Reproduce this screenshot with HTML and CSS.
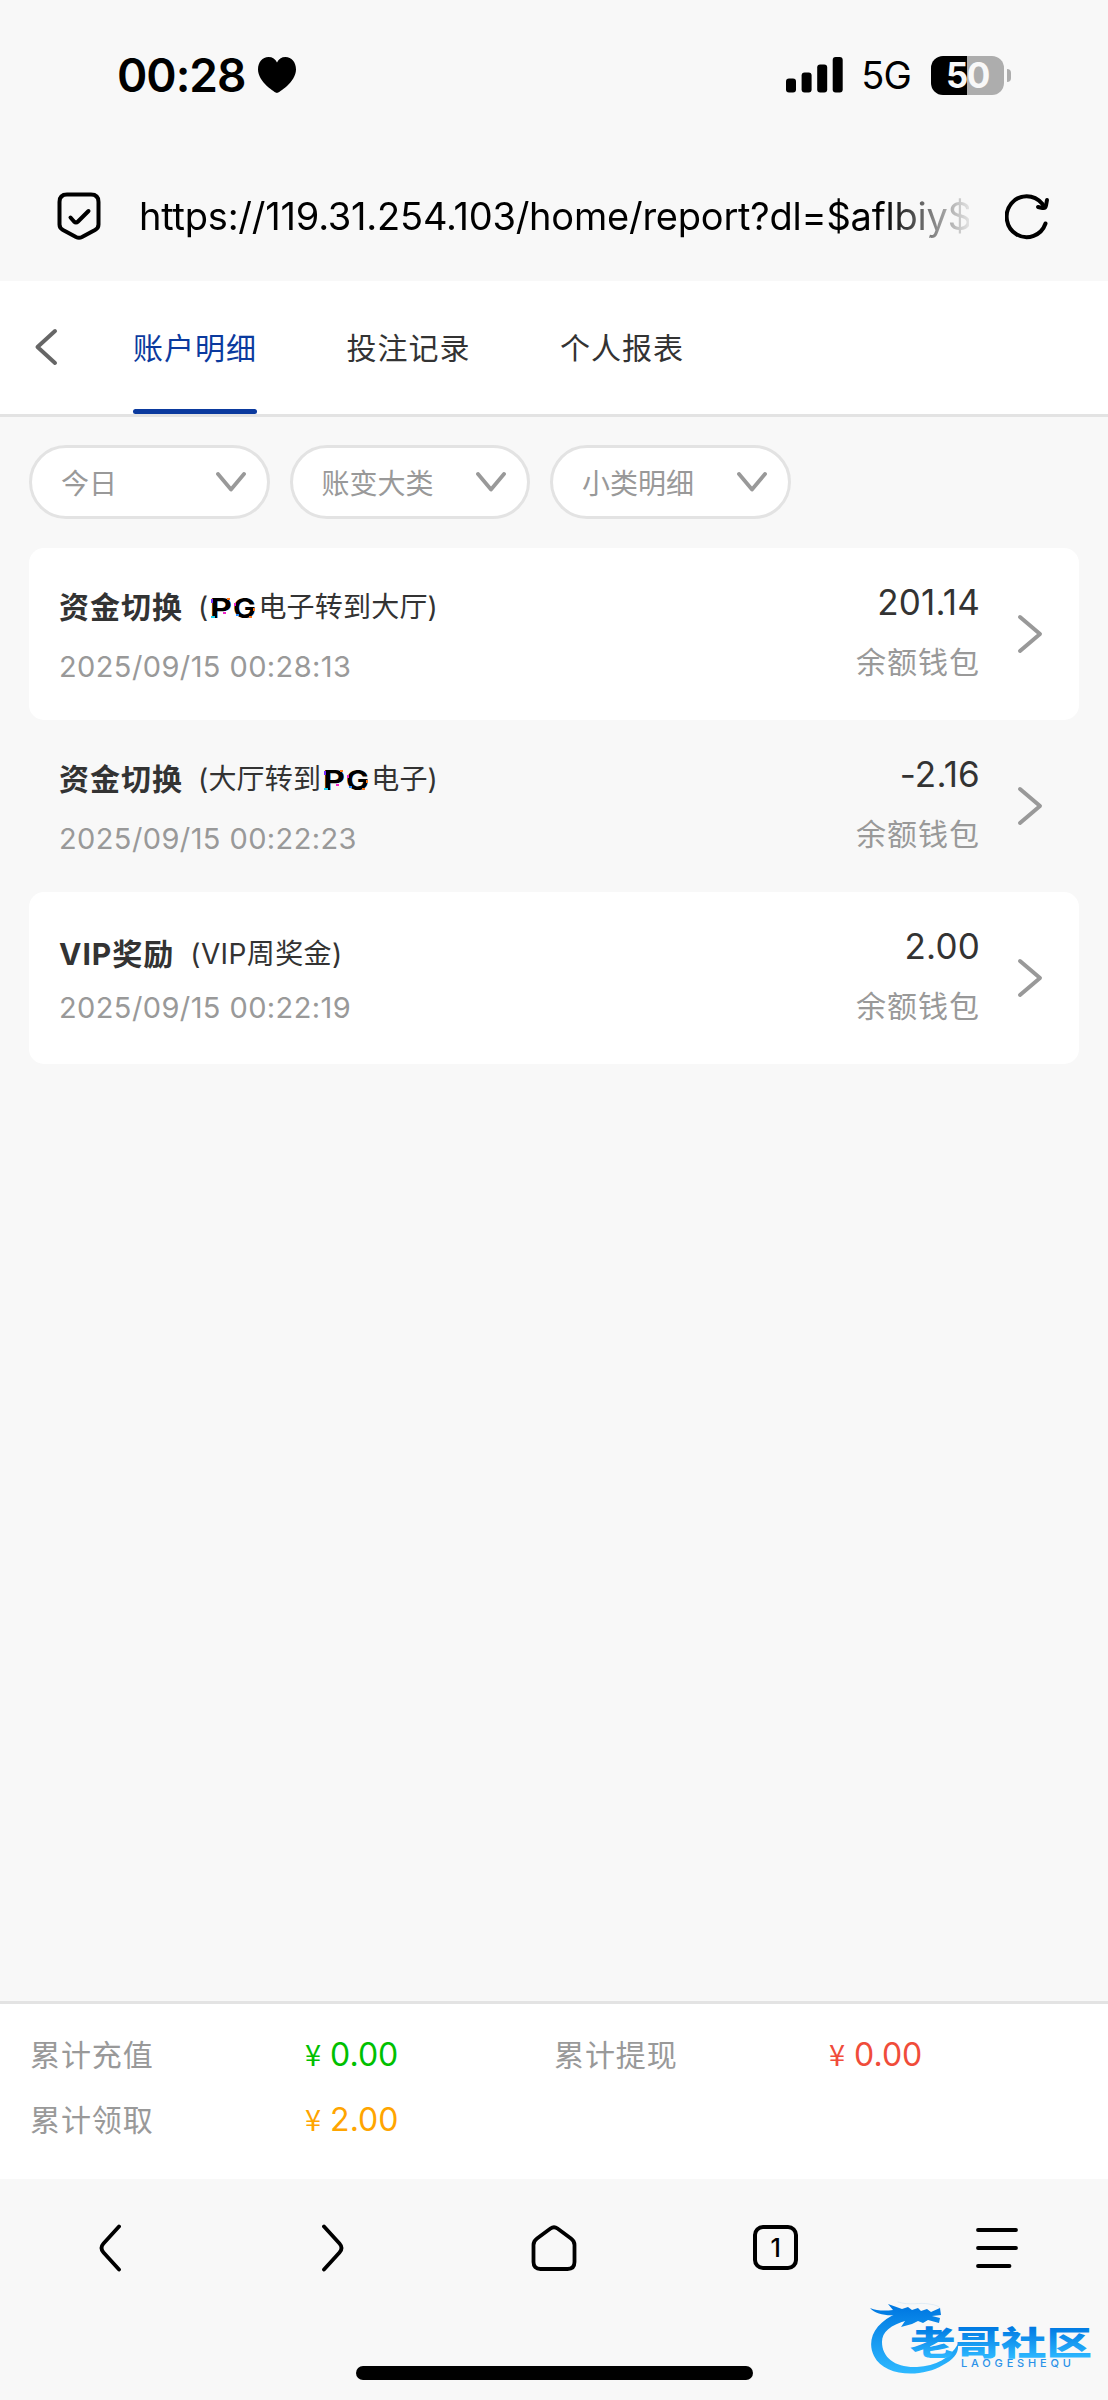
FILE: index.html
```html
<!DOCTYPE html>
<html lang="zh-CN">
<head>
  <meta charset="UTF-8" />
  <meta name="viewport" content="width=device-width, initial-scale=1.0"/>
  <title>账户明细</title>
  <link rel="stylesheet" href="styles.css">
</head>
<body>
  <!-- status bar -->
  <div class="status-bar">
    <div class="status-left">
      <span class="time">00:28</span>
      <svg class="heart" width="38" height="36" viewBox="0 0 38 36"><path d="M19 36C17.500 36 0 25 0 12.500C0 5 4.500 0 10.500 0C14.500 0 17.500 2 19 5.500C20.500 2 23.500 0 27.500 0C33.500 0 38 5 38 12.500C38 25 20.500 36 19 36Z"/></svg>
    </div>
    <div class="status-right">
      <svg class="signal" width="57" height="36" viewBox="0 0 57 36">
        <rect x="0" y="21.500" width="10" height="14" rx="3"/>
        <rect x="15.600" y="15.500" width="10" height="20" rx="3"/>
        <rect x="31.200" y="7.500" width="10" height="28" rx="3"/>
        <rect x="46.700" y="0" width="10" height="35.500" rx="3"/>
      </svg>
      <span class="network">5G</span>
      <div class="battery">50</div>
      <div class="battery-tip"></div>
    </div>
  </div>

  <!-- address bar -->
  <div class="address-bar">
    <svg class="shield" width="44" height="48" viewBox="0 0 44 48">
      <path d="M10 2.500H34Q41.500 2.500 41.500 10V32.500Q41.500 36 38 38L25 45Q22 46.500 19 45L6 38Q2.500 36 2.500 32.500V10Q2.500 2.500 10 2.500Z"/>
      <path d="M13.500 25.500L17 29.500Q19 31.500 21 29.500L31.500 19"/>
    </svg>
    <div class="url">https://119.31.254.103/home/report?dl=$aflbiy$</div>
    <svg class="reload" width="46" height="48" viewBox="0 0 46 48">
      <path d="M40.500 31.500A20 20.500 0 1 1 37 11.500L39.500 15"/>
      <path d="M42 8L41 13.500Q40.500 16.500 37.500 16L33 15"/>
    </svg>
  </div>

  <!-- tabs -->
  <div class="tabs">
    <svg class="back" width="24" height="38" viewBox="0 0 24 38"><path d="M21 3L3.500 19L21 35"/></svg>
    <a class="tab active">账户明细</a>
    <a class="tab">投注记录</a>
    <a class="tab">个人报表</a>
  </div>

  <!-- filters -->
  <div class="filters">
    <div class="filter">今日<svg width="30" height="20" viewBox="0 0 30 20"><path d="M2 2L15 17.500L28 2"/></svg></div>
    <div class="filter">账变大类<svg width="30" height="20" viewBox="0 0 30 20"><path d="M2 2L15 17.500L28 2"/></svg></div>
    <div class="filter">小类明细<svg width="30" height="20" viewBox="0 0 30 20"><path d="M2 2L15 17.500L28 2"/></svg></div>
  </div>

  <!-- records -->
  <div class="records">
    <div class="record">
      <div class="record-info">
        <div class="record-title with-logo"><b>资金切换</b><span class="detail">(<svg class="pg-logo" width="47" height="22" viewBox="0 0 47 22">
          <text x="0" y="21" textLength="22" lengthAdjust="spacingAndGlyphs">P</text>
          <text x="23" y="21" textLength="23" lengthAdjust="spacingAndGlyphs">G</text>
          <path class="violet" d="M1 2h2v4H1z"/><path class="orange" d="M17 1h3v2h-3zM43 11h2v3h-2zM39 19h3v2h-3z"/><path class="cyan" d="M1 19h4v2H1z"/><path class="pink" d="M13 15h3v2h-3zM24 6h2v3h-2z"/><path class="blue" d="M26 17h3v2h-3z"/>
        </svg>电子转到大厅)</span></div>
        <div class="record-date">2025/09/15 00:28:13</div>
      </div>
      <div class="record-amount">
        <div class="amount">201.14</div>
        <div class="wallet">余额钱包</div>
      </div>
      <svg class="arrow" width="26" height="40" viewBox="0 0 26 40"><path d="M3 3L23 20L3 37"/></svg>
    </div>
    <div class="record">
      <div class="record-info">
        <div class="record-title with-logo"><b>资金切换</b><span class="detail">(大厅转到<svg class="pg-logo" width="47" height="22" viewBox="0 0 47 22">
          <text x="0" y="21" textLength="22" lengthAdjust="spacingAndGlyphs">P</text>
          <text x="23" y="21" textLength="23" lengthAdjust="spacingAndGlyphs">G</text>
          <path class="violet" d="M1 2h2v4H1z"/><path class="orange" d="M17 1h3v2h-3zM43 11h2v3h-2zM39 19h3v2h-3z"/><path class="cyan" d="M1 19h4v2H1z"/><path class="pink" d="M13 15h3v2h-3zM24 6h2v3h-2z"/><path class="blue" d="M26 17h3v2h-3z"/>
        </svg>电子)</span></div>
        <div class="record-date">2025/09/15 00:22:23</div>
      </div>
      <div class="record-amount">
        <div class="amount">-2.16</div>
        <div class="wallet">余额钱包</div>
      </div>
      <svg class="arrow" width="26" height="40" viewBox="0 0 26 40"><path d="M3 3L23 20L3 37"/></svg>
    </div>
    <div class="record">
      <div class="record-info">
        <div class="record-title"><b>VIP奖励</b><span class="detail">(VIP周奖金)</span></div>
        <div class="record-date">2025/09/15 00:22:19</div>
      </div>
      <div class="record-amount">
        <div class="amount">2.00</div>
        <div class="wallet">余额钱包</div>
      </div>
      <svg class="arrow" width="26" height="40" viewBox="0 0 26 40"><path d="M3 3L23 20L3 37"/></svg>
    </div>
  </div>

  <!-- totals -->
  <div class="totals">
    <span class="label">累计充值</span>
    <span class="value green"><i>¥</i>0.00</span>
    <span class="label">累计提现</span>
    <span class="value red"><i>¥</i>0.00</span>
    <span class="label">累计领取</span>
    <span class="value orange"><i>¥</i>2.00</span>
  </div>

  <!-- browser toolbar -->
  <div class="toolbar">
    <div class="tool"><svg width="48" height="48" viewBox="0 0 48 48"><path d="M32 2.500L16.500 19.500Q12.500 24 16.500 28.500L32 45.500"/></svg></div>
    <div class="tool"><svg width="48" height="48" viewBox="0 0 48 48"><path d="M16 2.500L31.500 19.500Q35.500 24 31.500 28.500L16 45.500"/></svg></div>
    <div class="tool"><svg width="48" height="48" viewBox="0 0 48 48"><path d="M20.500 4.500Q24 2 27.500 4.500L41 14.500Q44.500 17 44.500 21V38Q44.500 45 37.500 45H10.500Q3.500 45 3.500 38V21Q3.500 17 7 14.500Z"/></svg></div>
    <div class="tool"><div class="tab-count">1</div></div>
    <div class="tool"><svg width="48" height="48" viewBox="0 0 48 48"><path d="M5 6H43M5 24H43M5 42H36.500"/></svg></div>
  </div>
  <div class="home-indicator"></div>

  <svg class="watermark" width="230" height="80" viewBox="0 0 230 80">
    <defs>
      <linearGradient id="blue" gradientUnits="userSpaceOnUse" x1="0" y1="27" x2="0" y2="58">
        <stop offset="0" stop-color="#0079e2"/>
        <stop offset="1" stop-color="#2db8ff"/>
      </linearGradient>
      <linearGradient id="ring" gradientUnits="userSpaceOnUse" x1="0" y1="8" x2="0" y2="72">
        <stop offset="0" stop-color="#0079e2"/>
        <stop offset="1" stop-color="#2db8ff"/>
      </linearGradient>
    </defs>
    <path fill="url(#ring)" d="M28 13C5 22-4 40 4 56C14 77 52 78 73 65C84 59 89 53 88 44C80 58 66 66 47 67C26 68 12 58 12 42C12 32 20 25 38 20Z"/>
    <path fill="url(#ring)" d="M0 8C7 11 15 11 23 10L18 4L32 9L38 7L42 10L48 8L51 11L57 9L61 12L70 8L71 15L62 16L70 18L69 23L58 20L53 23L48 21L42 24L31 27L35 21L24 22L26 15C16 16 5 14 0 8Z"/>
    <path class="whisker" d="M28 2C40 6 50 2 59 4Q69 5 71 9"/>
    <text class="wm-name" x="40" y="54.500" textLength="182" lengthAdjust="spacingAndGlyphs">老哥社区</text>
    <text class="wm-latin" x="91" y="67" textLength="110">LAOGESHEQU</text>
  </svg>
</body>
</html>
```

FILE: styles.css
```css
* {
  box-sizing: border-box;
}
body {
  position: relative;
  display: flex;
  flex-direction: column;
  width: 1108px;
  height: 2400px;
  margin: 0;
  overflow: hidden;
  background: #f8f8f8;
  color: #333;
  font-family: Inter, "Noto Sans CJK SC", sans-serif;
}
svg {
  flex: none;
  fill: none;
  stroke-linecap: round;
  stroke-linejoin: round;
}

/* status bar */
.status-bar {
  display: flex;
  justify-content: space-between;
  height: 150px;
  padding: 0 97px 0 117px;
  color: #000;
}
.status-left, .status-right {
  display: flex;
  align-items: center;
}
.time {
  font-size: 46px;
  font-weight: 600;
  letter-spacing: -1px;
}
.heart {
  margin-left: 13px;
  fill: #000;
}
.signal {
  fill: #000;
}
.network {
  margin-left: 18px;
  font-size: 38px;
  letter-spacing: -0.8px;
}
.battery {
  width: 73px;
  height: 39px;
  margin-left: 20px;
  border-radius: 12px;
  background: linear-gradient(90deg, #000 50%, #adadad 50%);
  color: #f8f8f8;
  font-size: 35px;
  font-weight: 700;
  line-height: 39px;
  letter-spacing: -1.5px;
  text-align: center;
}
.battery-tip {
  width: 4px;
  height: 13px;
  margin-left: 3px;
  border-radius: 0 6px 6px 0;
  background: #adadad;
}

/* address bar */
.address-bar {
  display: flex;
  align-items: center;
  height: 131px;
  padding: 0 57px 0 57px;
  color: #000;
}
.shield, .reload {
  stroke: #000;
  stroke-width: 4;
}
.url {
  width: 830px;
  margin-left: 38px;
  margin-right: auto;
  overflow: hidden;
  font-size: 38px;
  line-height: 50px;
  letter-spacing: -0.22px;
  white-space: nowrap;
  -webkit-mask-image: linear-gradient(90deg, #000 745px, transparent 838px);
  mask-image: linear-gradient(90deg, #000 745px, transparent 838px);
}

/* tabs */
.tabs {
  display: flex;
  height: 136px;
  padding-left: 34px;
  border-bottom: 3px solid #e3e3e3;
  background: #fff;
}
.back {
  margin: 47px 75px 0 0;
  stroke: #666;
  stroke-width: 4;
}
.tab {
  width: 124px;
  margin-right: 89.5px;
  font-size: 30px;
  line-height: 134px;
  letter-spacing: 1px;
  white-space: nowrap;
}
.tab.active {
  position: relative;
  color: #0b3a9e;
}
.tab.active::after {
  content: "";
  position: absolute;
  left: 0;
  top: 128px;
  width: 124px;
  height: 5px;
  border-radius: 3px;
  background: #0b3a9e;
}

/* filters */
.filters {
  display: flex;
  gap: 20px;
  padding: 28px 29px 29px;
}
.filter {
  display: flex;
  align-items: center;
  justify-content: space-between;
  width: 240.5px;
  height: 74px;
  padding: 0 21px 0 29px;
  border: 3px solid #e3e3e3;
  border-radius: 37px;
  background: #fff;
  color: #999;
  font-size: 28px;
}
.filter svg {
  stroke: #999;
  stroke-width: 3.8;
}

/* records */
.records {
  flex: 1;
  padding: 0 29px;
}
.record {
  display: flex;
  height: 172px;
  padding: 0 36px 0 30px;
  border-radius: 15px;
}
.record:nth-child(odd) {
  background: #fff;
}
.record-info {
  display: flex;
  flex: 1;
  flex-direction: column;
  justify-content: center;
  gap: 14px;
  padding-top: 5px;
  line-height: 40px;
}
.record-title {
  display: flex;
  height: 40px;
  font-size: 30px;
}
.record-title b {
  letter-spacing: 1px;
}
.detail {
  margin-left: 16px;
  font-size: 28px;
  letter-spacing: 0.4px;
}
.with-logo {
  height: 46px;
}
.with-logo .detail {
  margin-left: 15px;
  letter-spacing: 0.2px;
}
.pg-logo {
  margin: 0 1px 0 2px;
  overflow: visible;
  vertical-align: -2px;
}
.pg-logo text {
  fill: #000;
  font-size: 27px;
  font-weight: 700;
  letter-spacing: 0;
}
.violet { fill: #7a2cff; }
.orange { fill: #ff7a1c; }
.cyan { fill: #19d3f0; }
.pink { fill: #f026c8; }
.blue { fill: #2a8cff; }
.record-date {
  color: #999;
  font-size: 29px;
  letter-spacing: 0.4px;
}
.record-amount {
  padding: 34px 37px 0 0;
  line-height: 40px;
  text-align: right;
}
.amount {
  font-size: 35px;
  letter-spacing: 0.2px;
}
.wallet {
  margin-top: 20px;
  color: #999;
  font-size: 30px;
  letter-spacing: 1px;
}
.arrow {
  align-self: center;
  stroke: #999;
  stroke-width: 4;
}

/* totals */
.totals {
  display: grid;
  grid-template-columns: 275px 249px 275px 1fr;
  grid-auto-rows: 65px;
  height: 178px;
  padding: 19px 30px 0;
  border-top: 3px solid #e3e3e3;
  background: #fff;
  line-height: 65px;
}
.label {
  color: #999;
  font-size: 30px;
  letter-spacing: 0.9px;
}
.value {
  font-size: 32px;
  line-height: 63px;
}
.value i {
  margin-right: 9px;
  font-family: "Noto Sans CJK SC", sans-serif;
  font-size: 29px;
  font-style: normal;
  line-height: 1;
}
.value.green { color: #00c000; }
.value.red { color: #f04c3a; }
.value.orange { color: #ffa500; }

/* browser toolbar */
.toolbar {
  display: flex;
  height: 187px;
  padding-top: 45px;
}
.tool {
  display: flex;
  flex: 1;
  justify-content: center;
}
.tool svg {
  stroke: #000;
  stroke-width: 3.8;
}
.tab-count {
  width: 45px;
  height: 45px;
  margin-top: 1px;
  border: 4px solid #000;
  border-radius: 10px;
  color: #000;
  font-size: 25px;
  font-weight: 500;
  line-height: 38px;
  text-align: center;
}
.home-indicator {
  width: 397px;
  height: 14px;
  margin: 0 auto 20px;
  border-radius: 7px;
  background: #000;
}

/* site watermark */
.watermark {
  position: absolute;
  left: 870px;
  top: 2300px;
}
.whisker {
  stroke: #d5e6f3;
  stroke-width: 0.7;
}
.wm-name {
  fill: url(#blue);
  font-family: "Noto Sans CJK SC", sans-serif;
  font-size: 33px;
  font-weight: 900;
}
.wm-latin {
  fill: #2b92e8;
  font-size: 11px;
  font-weight: 500;
}
```
